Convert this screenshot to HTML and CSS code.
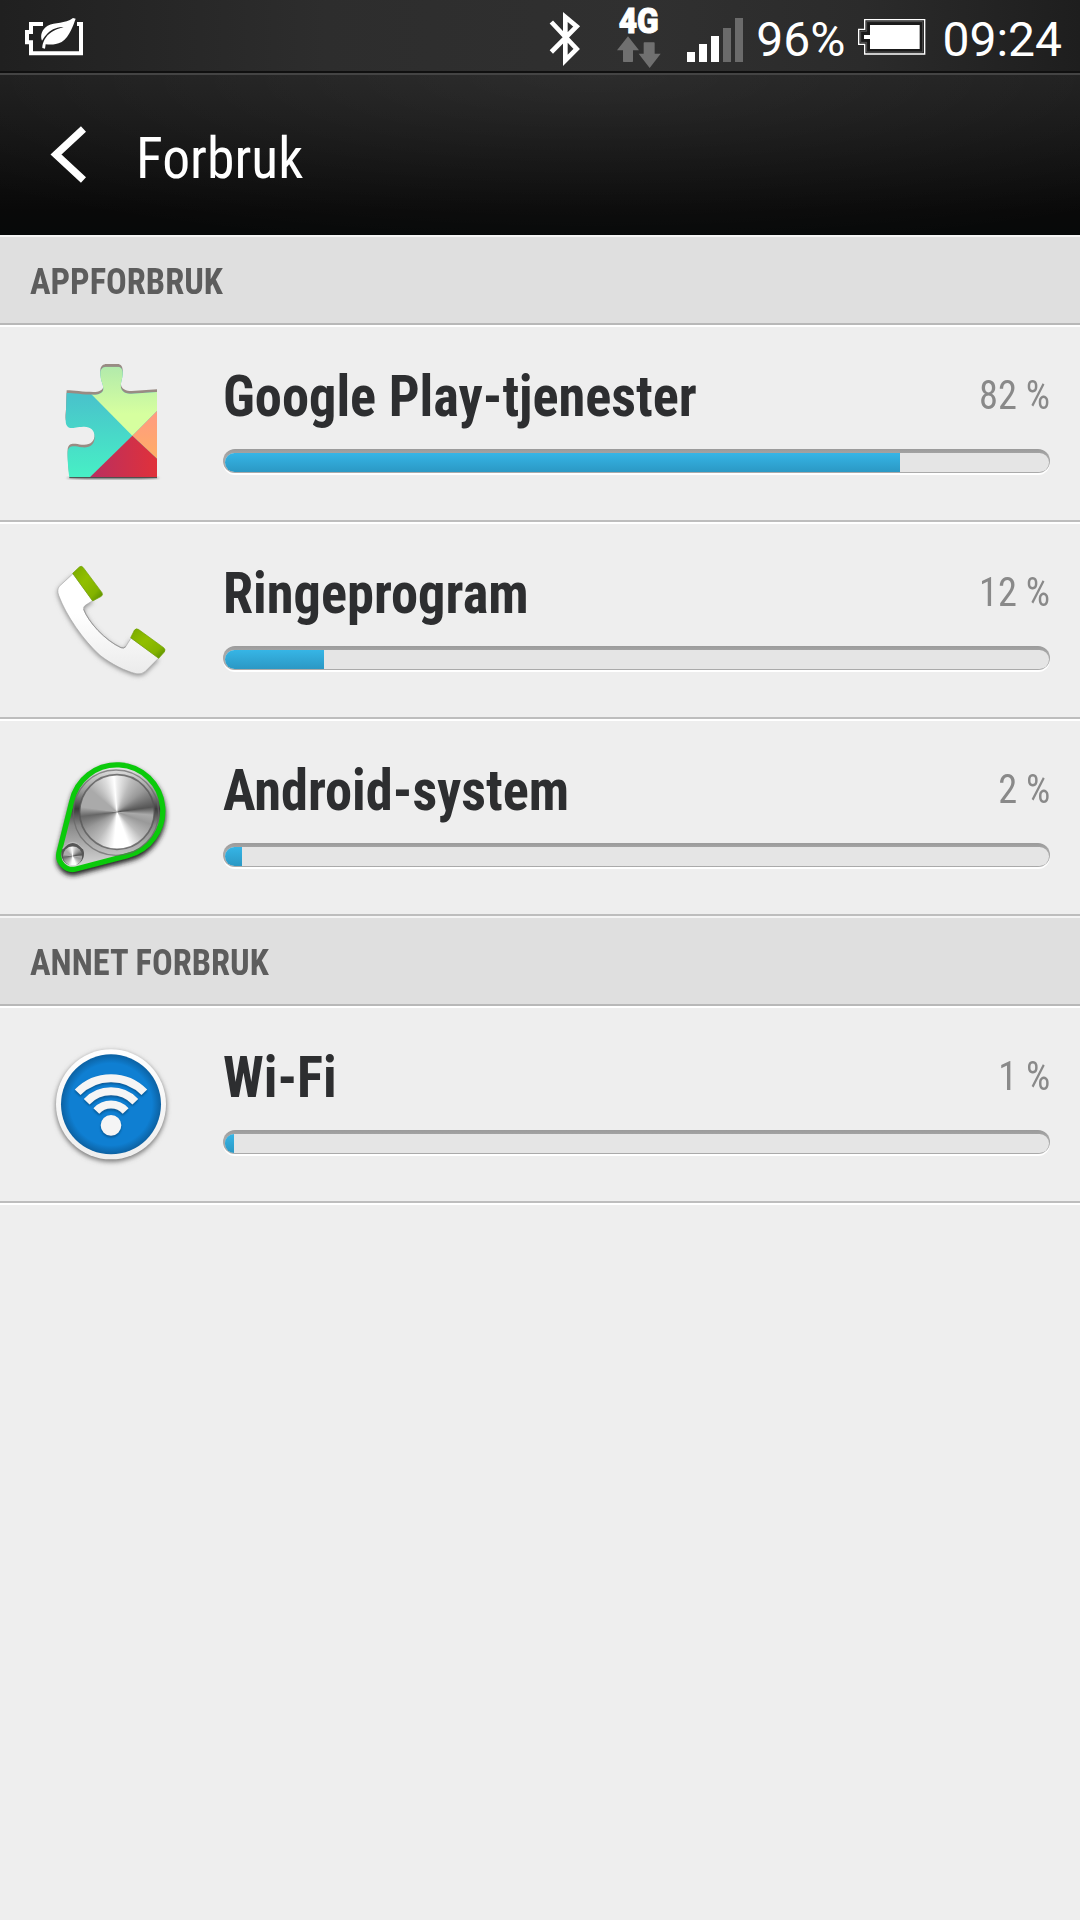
FILE: index.html
```html
<!DOCTYPE html>
<html lang="nb">
<head>
  <meta charset="UTF-8">
  <meta name="viewport" content="width=device-width, initial-scale=1.0">
  <title>Forbruk</title>
  <link rel="stylesheet" href="styles.css">
</head>
<body>
  <div class="status-bar">
    <svg class="power-saver" width="60" height="40" viewBox="0 0 180 120">
      <path d="M54 18H18V42H6V73H18V106H168V18H156" fill="none" stroke="#fff" stroke-width="12"/>
      <path d="M144 0L152 2C145 20 135 55 110 72C90 82 75 80 62 79L60 92L52 90C52 75 60 55 80 42C98 31 110 30 116 27C95 25 75 37 64 50C58 56 55 62 51 68C45 52 50 35 68 23C90 12 120 18 144 0Z" fill="#fff" stroke="#242424" stroke-width="3" paint-order="stroke"/>
    </svg>
    <div class="status-right">
      <svg class="bluetooth" width="34" height="60" viewBox="0 0 102 180">
        <path d="M10 40L86 121L52 155V25L86 53L10 130" transform="translate(0 -1)" fill="none" stroke="#fff" stroke-width="14"/>
      </svg>
      <svg class="network" width="46" height="68" viewBox="0 -12 138 204">
        <text class="network-type" x="5" y="88" textLength="120" lengthAdjust="spacingAndGlyphs">4G</text>
        <path d="M33 97L66 139H48V172Q48 174 46 174H20Q18 174 18 172V139H0Z M82 115H111Q113 115 113 118V149H131L98 192L65 149H80V118Q80 115 82 115Z" fill="#707070"/>
      </svg>
      <div class="signal">
        <i class="on s1"></i><i class="on s2"></i><i class="on s3"></i><i class="s4"></i><i class="s5"></i>
      </div>
      <span class="battery-level">96%</span>
      <svg class="battery" width="68" height="36" viewBox="0 0 204 108">
        <path d="M20 2H200V105H20V76H2V31H20Z" fill="none" stroke="#fff" stroke-width="4"/>
        <path d="M26 8H194V99H26V70H8V37H26Z" fill="#1a1a1a" stroke="#666" stroke-width="2"/>
        <path d="M36 18H185V90H36V60H18V48H36Z" fill="#fff"/>
      </svg>
      <span class="clock">09:24</span>
    </div>
  </div>

  <div class="header">
    <svg class="back" width="36" height="57" viewBox="0 0 36 57">
      <path d="M33.500 3L6 28.500L33.500 54" fill="none" stroke="#fff" stroke-width="7.500"/>
    </svg>
    <h1>Forbruk</h1>
  </div>

  <div class="section"><h2>Appforbruk</h2></div>

  <div class="row">
    <svg class="icon" viewBox="0 -1 420 480">
      <defs>
        <path id="puzzle" d="M80 158C100 158 130 163 160 163C177 163 190 157 190 145C190 130 181 122 181 98C181 85 190 79 200 79H232C243 79 248 87 248 98C248 118 241 125 243 142C246 155 258 160 275 160L351 155V412H88C84 380 82 350 83 334C86 312 105 318 125 321C150 324 164 312 164 290C164 268 150 258 130 259C110 260 100 264 90 263C75 258 75 240 78 215C79 190 79 170 80 158Z"/>
        <clipPath id="puzzle-clip"><use href="#puzzle"/></clipPath>
        <linearGradient id="teal" x1="0" y1="0" x2="0" y2="1"><stop offset=".3" stop-color="#49c4cb"/><stop offset="1" stop-color="#47f0c5"/></linearGradient>
        <linearGradient id="lime" x1="0" y1="0" x2="0" y2="1"><stop offset="0" stop-color="#b0e9ac"/><stop offset=".7" stop-color="#d6ff9f"/></linearGradient>
        <linearGradient id="red" x1="0" y1="0" x2="1" y2="0"><stop offset="0" stop-color="#b82f60"/><stop offset="1" stop-color="#e23139"/></linearGradient>
        <linearGradient id="orange" x1="0" y1="0" x2="0" y2="1"><stop offset="0" stop-color="#ff9a83"/><stop offset="1" stop-color="#ffae65"/></linearGradient>
        <filter id="soft"><feGaussianBlur stdDeviation="3"/></filter>
        <filter id="softer" x="-20%" y="-20%" width="140%" height="140%"><feGaussianBlur stdDeviation="8"/></filter>
      </defs>
      <ellipse cx="219" cy="413" rx="140" ry="4" fill="#777" filter="url(#soft)"/>
      <use href="#puzzle" fill="#998b83" transform="translate(0 -8)"/>
      <g clip-path="url(#puzzle-clip)">
        <path d="M70 70H360V412H70Z" fill="url(#teal)"/>
        <path d="M64 70H360V203L277 286Z" fill="url(#lime)"/>
        <path d="M277 286L355 208V359Z" fill="url(#orange)"/>
        <path d="M277 286L360 364V412H148Z" fill="url(#red)"/>
      </g>
      <path d="M88 412H351" stroke="#444" stroke-width="3"/>
    </svg>
    <div class="usage">
      <div class="label"><span class="name">Google Play-tjenester</span><span class="percent">82 %</span></div>
      <div class="bar"><div class="fill" style="width: 675px"></div></div>
    </div>
  </div>

  <div class="row">
    <svg class="icon" viewBox="0 -10 420 480">
      <defs>
        <linearGradient id="handset" x1="0" y1="0" x2="0" y2="1"><stop offset=".4" stop-color="#fff"/><stop offset="1" stop-color="#ebebeb"/></linearGradient>
        <linearGradient id="cap" x1="0" y1="0" x2="1" y2="1"><stop offset="0" stop-color="#78a900"/><stop offset=".4" stop-color="#91bf00"/><stop offset=".75" stop-color="#83b300"/><stop offset="1" stop-color="#4f8500"/></linearGradient>
      </defs>
      <path d="M99 100L58 138Q50 148 56 165C78 225 130 300 180 345C215 372 255 392 288 400Q305 403 315 394L356 353L273 293L257 319Q252 325 243 322C195 300 145 245 131 207Q129 200 136 195L158 181Z" fill="#888" filter="url(#softer)" transform="translate(0 5)"/>
      <path d="M99 100L58 138Q50 148 56 165C78 225 130 300 180 345C215 372 255 392 288 400Q305 403 315 394L356 353L273 293L257 319Q252 325 243 322C195 300 145 245 131 207Q129 200 136 195L158 181Z" fill="url(#handset)" stroke="#aaa" stroke-width="2"/>
      <path d="M131 207C145 245 195 300 243 322Q252 325 257 319" fill="none" stroke="#999" stroke-width="3"/>
      <path d="M98 99L118 80Q124 75 130 82L186 157Q190 163 184 168L158 182Z" fill="url(#cap)" stroke="#6e9f00" stroke-width="2"/>
      <path d="M272 292L283 270Q288 263 295 267L371 322Q378 328 373 335L356 354Z" fill="url(#cap)" stroke="#6e9f00" stroke-width="2"/>
    </svg>
    <div class="usage">
      <div class="label"><span class="name">Ringeprogram</span><span class="percent">12 %</span></div>
      <div class="bar"><div class="fill" style="width: 99px"></div></div>
    </div>
  </div>

  <div class="row">
    <svg class="icon" viewBox="0 -34 420 480">
      <defs>
        <linearGradient id="plate" x1="0" y1="0" x2="0" y2="1"><stop offset="0" stop-color="#eee"/><stop offset=".25" stop-color="#999"/><stop offset=".42" stop-color="#3c3c3c"/><stop offset=".58" stop-color="#888"/><stop offset="1" stop-color="#ddd"/></linearGradient>
      </defs>
      <path d="M95 170A138 138 0 1 1 262 331L108 371A42 42 0 0 1 58 318Z" fill="#222" stroke="#222" stroke-width="16" filter="url(#softer)" transform="translate(1 10)"/>
      <path d="M95 170A138 138 0 1 1 262 331L108 371A42 42 0 0 1 58 318Z" fill="url(#plate)" stroke="#0bca0b" stroke-width="16"/>
      <circle cx="228" cy="202" r="128" fill="none" stroke="#666" stroke-width="4" opacity=".7"/>
      <foreignObject x="119" y="88" width="224" height="224"><div class="knob"></div></foreignObject>
      <circle cx="231" cy="200" r="112" fill="none" stroke="#555" stroke-width="5" opacity=".75"/>
      <circle cx="98" cy="326" r="34" fill="#555"/>
      <foreignObject x="69" y="303" width="58" height="58"><div class="knob"></div></foreignObject>
      <path d="M68 310Q98 272 129 310" fill="none" stroke="#bbb" stroke-width="4"/>
    </svg>
    <div class="usage">
      <div class="label"><span class="name">Android-system</span><span class="percent">2 %</span></div>
      <div class="bar"><div class="fill" style="width: 17px"></div></div>
    </div>
  </div>

  <div class="section"><h2>Annet forbruk</h2></div>

  <div class="row">
    <svg class="icon" viewBox="0 -28 420 480">
      <defs>
        <linearGradient id="rim" x1="0" y1="0" x2="0" y2="1"><stop offset="0" stop-color="#fff"/><stop offset="1" stop-color="#eee"/></linearGradient>
        <radialGradient id="blue"><stop offset=".82" stop-color="#0f7fd2"/><stop offset="1" stop-color="#0c61a2"/></radialGradient>
        <g id="waves">
          <path d="M113 186A139 139 0 0 1 313 186M140 214A101 101 0 0 1 286 214M169 242A60 60 0 0 1 257 242" fill="none" stroke-width="24"/>
          <circle cx="213" cy="285" r="26" stroke-width="10"/>
        </g>
      </defs>
      <circle cx="213" cy="228" r="166" fill="#777" filter="url(#softer)"/>
      <circle cx="213" cy="222" r="165" fill="url(#rim)"/>
      <circle cx="213" cy="222" r="150" fill="url(#blue)"/>
      <use href="#waves" stroke="#075792" fill="#075792" filter="url(#soft)" transform="translate(0 5)"/>
      <use href="#waves" stroke="#f5f5f5" fill="#f5f5f5"/>
    </svg>
    <div class="usage">
      <div class="label"><span class="name">Wi-Fi</span><span class="percent">1 %</span></div>
      <div class="bar"><div class="fill" style="width: 9px"></div></div>
    </div>
  </div>
</body>
</html>
```
FILE: styles.css
```css
*, *:before, *:after{
  padding: 0;
  margin: 0;
  box-sizing: border-box;
}
body{
  min-height: 100vh;
  background: #eeeeee;
  font-family: "Roboto Condensed", Roboto, sans-serif;
}
svg{
  display: block;
  flex: none;
}

/* Status bar */
.status-bar{
  height: 73px;
  display: flex;
  justify-content: space-between;
  padding: 0 18px 0 25px;
  background: linear-gradient(90deg, #202020, #2d2d2d 30%, #303030 60%, #2b2b2b 80%, #1e1e1e);
  border-bottom: 2px solid #101010;
  color: #ffffff;
  font-family: Roboto, sans-serif;
  font-size: 48px;
  line-height: 79px;
}
.power-saver{
  margin-top: 18px;
}
.status-right{
  display: flex;
  align-items: flex-start;
}
.bluetooth{
  margin: 9px 35px 0 0;
}
.network{
  margin: 0 24px 0 0;
}
.network-type{
  font-family: Roboto, sans-serif;
  font-weight: 900;
  font-size: 106px;
  fill: #ffffff;
  stroke: #ffffff;
  stroke-width: 3px;
}
.signal{
  display: flex;
  align-items: flex-end;
  gap: 4px;
  height: 62px;
  margin-right: 13px;
}
.signal i{
  width: 8px;
  background: #6b6b6b;
}
.signal .on{ background: #ffffff; }
.signal .s1{ height: 10px; }
.signal .s2{ height: 18px; }
.signal .s3{ height: 26px; }
.signal .s4{ height: 34px; }
.signal .s5{ height: 44px; }
.battery{
  margin: 19px 16px 0 13px;
}

/* Header */
.header{
  height: 162px;
  display: flex;
  align-items: flex-start;
  padding-left: 50px;
  color: #ffffff;
  border-top: 2px solid #444444;
  background: radial-gradient(ellipse 75% 110% at 55% 0, rgba(255,255,255,0.07), rgba(255,255,255,0)), linear-gradient(#1d1d1d, #090909 85%, #070909);
}
.back{
  margin-top: 51px;
}
.header h1{
  margin: 49px 0 0 50px;
  font-size: 58px;
  font-weight: 400;
  line-height: 68px;
  transform: scaleX(0.958);
  transform-origin: left;
}

/* Lists */
.section{
  height: 90px;
  padding: 12px 30px 0;
  background: #dfdfdf;
  border-top: 2px solid #f4f4f4;
  border-bottom: 2px solid #b8b8b8;
}
.section h2{
  color: #5d5d5d;
  font-size: 36px;
  font-weight: 700;
  line-height: 66px;
  text-transform: uppercase;
  transform: scaleX(0.956);
  transform-origin: left;
}
.row{
  height: 197px;
  display: flex;
  padding: 0 30px 0 40px;
  border-top: 2px solid #ffffff;
  border-bottom: 2px solid #bdbdbd;
}
.row:last-child{
  box-shadow: 0 2px 0 #ffffff;
}
.icon{
  width: 140px;
  height: 160px;
  margin: 13px 43px 0 0;
}
.usage{
  flex: 1;
  padding-top: 35px;
}
.label{
  display: flex;
  justify-content: space-between;
  height: 87px;
}
.name{
  color: #2d2e30;
  font-size: 58px;
  font-weight: 700;
  line-height: 68px;
  transform: scaleX(0.938);
  transform-origin: left;
}
.percent{
  color: #898989;
  font-size: 40px;
  line-height: 68px;
  transform: scaleX(0.96);
  transform-origin: right;
}
.bar{
  height: 24px;
  border-radius: 12px;
  padding: 4px 2px 1px;
  background: linear-gradient(#9b9b9b, #a8a8a8 30%, #aaaaaa);
  box-shadow: 0 2px 0 #ffffff;
  position: relative;
}
.bar:before{
  content: "";
  position: absolute;
  top: 4px;
  right: 1px;
  bottom: 1px;
  left: 2px;
  border-radius: 10px;
  background: #e5e5e5;
}
.fill{
  position: relative;
  height: 19px;
  background: linear-gradient(#36b5e6, #2b98c4);
  clip-path: inset(0 0 0 0 round 10px 0 0 10px);
}

/* Brushed metal discs of the system icon */
.knob{
  width: 100%;
  height: 100%;
  border-radius: 50%;
  background: conic-gradient(from 0deg, #eee, #bbb 25deg, #999 50deg, #555 82deg, #aaa 95deg, #999 110deg, #bbb 135deg, #fff 160deg, #fff 185deg, #bbb 215deg, #999 240deg, #666 263deg, #aaa 278deg, #aaa 310deg, #ddd 340deg, #fff 355deg, #eee);
}
```
